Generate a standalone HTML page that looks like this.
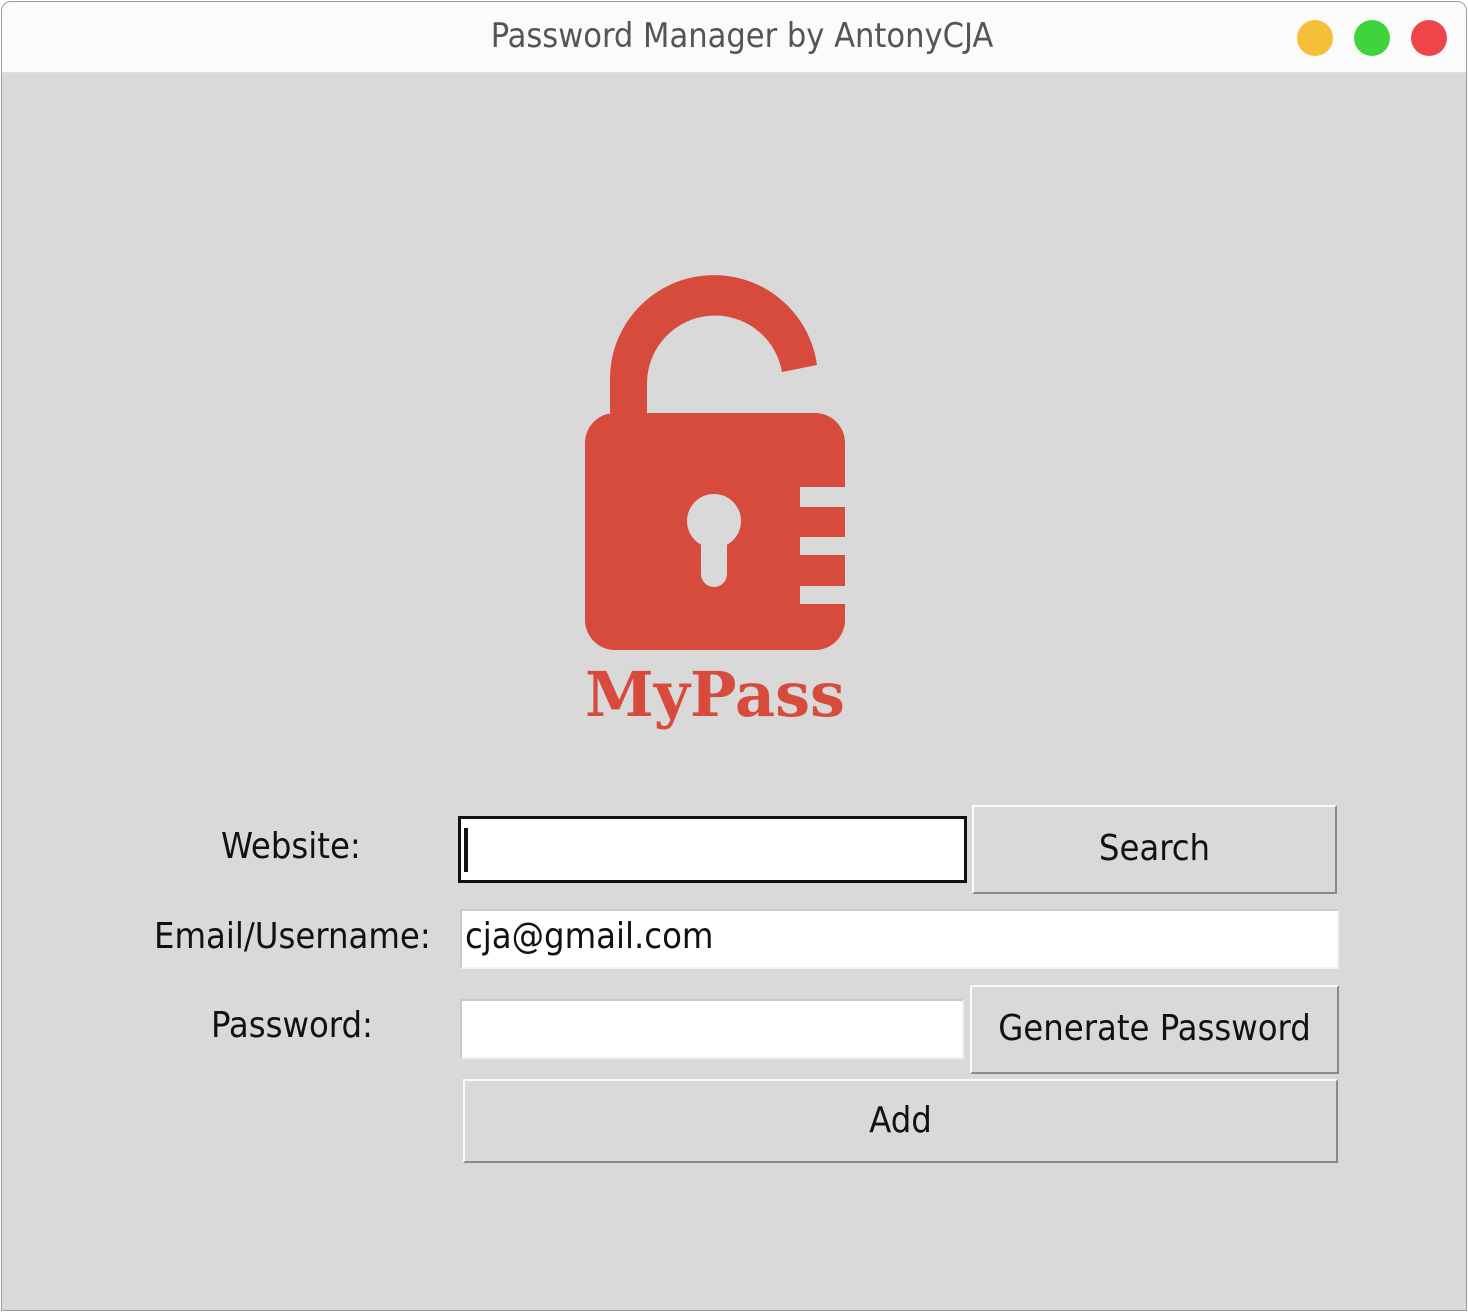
<!DOCTYPE html>
<html><head><style>
html,body{margin:0;padding:0}
body{width:1468px;height:1312px;background:#fff;position:relative;overflow:hidden;font-family:"DejaVu Sans","Liberation Sans",sans-serif}
.win{position:absolute;left:1px;top:1px;width:1464px;height:1308px;border:1px solid #9a9a9a;border-radius:10px 10px 0 0;background:#d9d9d9;overflow:hidden}
.tb{position:absolute;left:0;top:0;width:100%;height:70px;background:#fbfbfb;border-bottom:1px solid #e0e0e0}
.title{position:absolute;left:0;width:1480px;top:14px;text-align:center;font-size:34px;color:#555;font-family:"DejaVu Sans Condensed","DejaVu Sans",sans-serif}
.dot{position:absolute;top:18px;width:36px;height:36px;border-radius:50%}
.lbl{position:absolute;font-size:36px;color:#111;font-family:"DejaVu Sans Condensed","DejaVu Sans",sans-serif;white-space:nowrap}
.ent{position:absolute;background:#fff;box-sizing:border-box;border:2px solid #c9c9c9;border-right-color:#f0f0f0;border-bottom-color:#f0f0f0}
.btn{position:absolute;box-sizing:border-box;background:#d9d9d9;border:2px solid #fafafa;border-right-color:#8a8a8a;border-bottom-color:#8a8a8a;text-align:center;font-size:36px;color:#111;font-family:"DejaVu Sans Condensed","DejaVu Sans",sans-serif;white-space:nowrap}
</style></head><body>
<div class="win">
<div class="tb"><div class="title">Password Manager by AntonyCJA</div>
<div class="dot" style="left:1295px;background:#f5c037"></div>
<div class="dot" style="left:1352px;background:#3fd43c"></div>
<div class="dot" style="left:1409px;background:#ee4548"></div>
</div>
<svg style="position:absolute;left:-2px;top:-2px" width="1468" height="1312">
<path d="M610 413 V382 A104 104 0 0 1 817 365 L782 372 A68 68 0 0 0 647 382 V413 Z" fill="#d64b3c"/>
<rect x="585" y="413" width="260" height="237" rx="30" fill="#d64b3c"/>
<rect x="800" y="487" width="46" height="20" fill="#d9d9d9"/>
<rect x="800" y="537" width="46" height="18" fill="#d9d9d9"/>
<rect x="800" y="586" width="46" height="18" fill="#d9d9d9"/>
<circle cx="714" cy="521" r="27" fill="#d9d9d9"/>
<rect x="701" y="525" width="26" height="62" rx="13" fill="#d9d9d9"/>
<text x="585" y="716" font-family="DejaVu Serif,serif" font-weight="bold" font-size="62" fill="#d64b3c" textLength="260" lengthAdjust="spacingAndGlyphs">MyPass</text>
</svg>
<div class="lbl" style="left:219px;top:824px">Website:</div>
<div class="lbl" style="left:152px;top:914px">Email/Username:</div>
<div class="lbl" style="left:209px;top:1003px">Password:</div>
<div class="ent" style="left:456px;top:814px;width:509px;height:67px;border:3px solid #111"><div style="position:absolute;left:3px;top:9px;width:4px;height:44px;background:#111"></div></div>
<div class="btn" style="left:970px;top:803px;width:365px;height:89px;line-height:84px">Search</div>
<div class="ent" style="left:458px;top:907px;width:879px;height:60px"><span style="position:absolute;left:3px;top:5px;font-size:36px;color:#111;font-family:'DejaVu Sans Condensed','DejaVu Sans',sans-serif;white-space:nowrap">cja@gmail.com</span></div>
<div class="ent" style="left:458px;top:997px;width:504px;height:60px"></div>
<div class="btn" style="left:968px;top:983px;width:369px;height:89px;line-height:84px">Generate Password</div>
<div class="btn" style="left:461px;top:1077px;width:875px;height:84px;line-height:80px">Add</div>
</div>
</body></html>
